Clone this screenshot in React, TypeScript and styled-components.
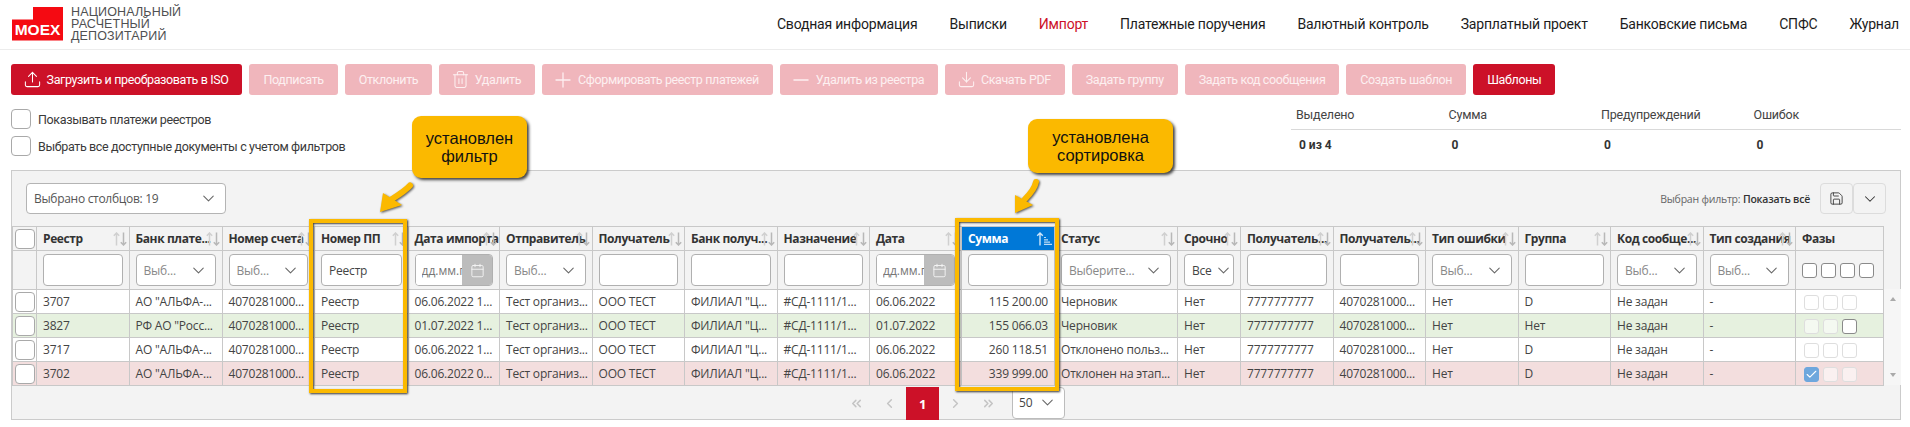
import React from "react";
import styled, { createGlobalStyle } from "styled-components";
import { Upload, Trash2, Plus, Minus, Download, Calendar, Save, ChevronDown, ChevronLeft, ChevronRight, ChevronsLeft, ChevronsRight, Check } from "lucide-react";

const Global = createGlobalStyle`
  html, body { margin: 0; padding: 0; background: #fff; }
  body { font-family: "Roboto", "Liberation Sans", sans-serif; color: #333; }
  * { box-sizing: border-box; }
`;

const Page = styled.div`
  position: relative;
  width: 1910px;
  height: 427px;
  overflow: hidden;
`;

const Header = styled.header`
  display: flex;
  align-items: center;
  justify-content: space-between;
  height: 50px;
  padding: 0 11px 2px 12px;
  border-bottom: 1px solid #ececec;
`;

const Logo = styled.div`
  display: flex;
  align-items: flex-end;
  gap: 8px;
  height: 34px;
`;

const LogoMark = styled.div`
  width: 51px;
  height: 34px;
  background: #f50a12;
  clip-path: polygon(21px 0, 100% 0, 100% 100%, 0 100%, 0 13px, 21px 13px);
  color: #fff;
  font: bold 15.5px/1 "Liberation Sans", sans-serif;
  display: flex;
  align-items: flex-end;
  justify-content: center;
  padding-bottom: 3px;
`;

const LogoText = styled.div`
  font: 12.5px/12px "Liberation Sans", sans-serif;
  color: #4f5052;
  letter-spacing: 0.15px;
  margin-bottom: -1px;
`;

const Nav = styled.nav`
  display: flex;
  gap: 32px;
`;

const NavItem = styled.span<{ $active?: boolean }>`
  font-size: 14px;
  letter-spacing: -0.2px;
  color: ${(p) => (p.$active ? "#cc1128" : "#1c1c1c")};
`;

const Toolbar = styled.div`
  display: flex;
  gap: 7px;
  margin-top: 14px;
  padding-left: 11px;
`;

const Btn = styled.div<{ $on?: boolean }>`
  display: flex;
  align-items: center;
  gap: 6px;
  height: 31px;
  padding: 0 14px;
  border-radius: 3px;
  font-size: 12.5px;
  letter-spacing: -0.38px;
  white-space: nowrap;
  background: ${(p) => (p.$on ? "#cc1128" : "#f0b6bc")};
  color: ${(p) => (p.$on ? "#fff" : "#fdf0f1")};
`;

const BtnIcon = styled.span<{ $wide?: boolean }>`
  display: flex;
  flex: none;
  margin: ${(p) => (p.$wide ? "0 -3px 0 -5px" : "0 -1px 0 -2.4px")};
`;

const Options = styled.div`
  display: flex;
  justify-content: space-between;
  height: 75px;
  padding: 5px 9px 0 11px;
`;

const Checks = styled.div`
  display: flex;
  flex-direction: column;
  gap: 7px;
  padding-top: 9px;
`;

const CheckRow = styled.label`
  display: flex;
  align-items: center;
  gap: 7px;
  font-size: 12.5px;
  letter-spacing: -0.36px;
  color: #3a3a3a;
`;

const Box = styled.span`
  display: block;
  flex: none;
  width: 20px;
  height: 20px;
  background: #fff;
  border: 1px solid #a9a9a9;
  border-radius: 4px;
`;

const Stats = styled.div`
  display: grid;
  grid-template-columns: repeat(4, 152.5px);
  width: 610px;
  grid-template-rows: 30px 30px;
`;

const StatLabel = styled.div`
  display: flex;
  align-items: center;
  padding-left: 5px;
  font-size: 12.5px;
  letter-spacing: -0.2px;
  color: #444;
  border-bottom: 1px solid #d9d9d9;
`;

const StatValue = styled.div`
  display: flex;
  align-items: center;
  padding-left: 8px;
  font-size: 12px;
  font-weight: 700;
  color: #333;
`;

const Panel = styled.section`
  width: 1890px;
  height: 250px;
  margin-left: 11px;
  background: #f3f3f3;
  border: 1px solid #cbcbcb;
  font-family: "Open Sans", "Noto Sans", sans-serif;
  font-size: 12px;
  letter-spacing: -0.2px;
`;

const PanelBar = styled.div`
  display: flex;
  align-items: flex-start;
  justify-content: space-between;
  height: 55px;
  padding: 12px 14px 0;
`;

const ColumnSelect = styled.div`
  display: flex;
  align-items: center;
  justify-content: space-between;
  width: 200px;
  height: 31px;
  padding: 0 10px 0 7px;
  background: #fff;
  border: 1px solid #b4b4b4;
  border-radius: 4px;
  letter-spacing: -0.3px;
  color: #555;
`;

const FilterInfo = styled.div`
  display: flex;
  align-items: center;
  height: 31px;
`;

const FilterLabel = styled.span`
  font-size: 10.5px;
  letter-spacing: -0.22px;
  color: #666;
  margin-right: 10px;
  b { color: #333; font-weight: 600; }
`;

const IconBtn = styled.div`
  display: flex;
  align-items: center;
  justify-content: center;
  width: 33px;
  height: 31px;
  border: 1px solid #dcdcdc;
  border-radius: 4px;
  color: #333;
`;

const TableWrap = styled.div`
  display: flex;
  align-items: flex-start;
`;

const Table = styled.table`
  width: 1871px;
  border-collapse: collapse;
  table-layout: fixed;
  td, th { border: 1px solid #c8c8c8; }
`;

const HeadCell = styled.th<{ $sorted?: boolean }>`
  position: relative;
  height: 24px;
  padding: 0 0 0 6px;
  text-align: left;
  font-size: 12px;
  font-weight: 700;
  letter-spacing: -0.4px;
  white-space: nowrap;
  overflow: hidden;
  color: ${(p) => (p.$sorted ? "#fff" : "#333")};
  background: ${(p) => (p.$sorted ? "#0078d7" : "#f3f3f3")};
`;

const SortMark = styled.svg`
  position: absolute;
  right: 2px;
  top: 5px;
`;

const FilterCell = styled.td`
  height: 39px;
  padding: 0 6px;
  background: #f3f3f3;
`;

const FilterBox = styled.input`
  display: block;
  width: 100%;
  height: 32px;
  padding: 0 7px;
  background: #fff;
  border: 1px solid #b0b0b0;
  border-radius: 4px;
  outline: none;
  font: 12px "Open Sans", "Noto Sans", sans-serif;
  letter-spacing: -0.2px;
  color: #444;
`;

const FilterSelect = styled.div<{ $dark?: boolean; $tight?: boolean }>`
  display: flex;
  align-items: center;
  justify-content: space-between;
  height: 32px;
  padding: 0 ${(p) => (p.$tight ? "3px" : "10px")} 0 7px;
  background: #fff;
  border: 1px solid #b0b0b0;
  border-radius: 4px;
  font-weight: 400;
  color: ${(p) => (p.$dark ? "#444" : "#888")};
`;

const DateField = styled.div`
  display: flex;
  height: 32px;
  border: 1px solid #b0b0b0;
  border-radius: 4px;
  overflow: hidden;
  background: #fff;
`;

const DateInput = styled.input`
  flex: 1;
  min-width: 0;
  padding: 0 0 0 6px;
  border: 0;
  outline: none;
  font: 12px "Open Sans", "Noto Sans", sans-serif;
  &::placeholder { color: #777; opacity: 1; }
`;

const DateBtn = styled.div`
  display: flex;
  align-items: center;
  justify-content: center;
  flex: none;
  width: 30px;
  background: #bcbcbc;
  color: #f4f4f4;
`;

const PhaseGroup = styled.div`
  display: flex;
  gap: 4px;
`;

const PhaseBox = styled.span<{ $mode?: "on" | "off" | "checked" }>`
  display: flex;
  align-items: center;
  justify-content: center;
  flex: none;
  width: 15px;
  height: 15px;
  border-radius: 3px;
  color: #fff;
  background: ${(p) => (p.$mode === "checked" ? "#6ea7dd" : p.$mode === "off" ? "rgba(255,255,255,.55)" : "#fff")};
  border: 1px solid ${(p) => (p.$mode === "checked" ? "#6ea7dd" : p.$mode === "off" ? "#dedede" : "#8a8a8a")};
`;

const Row = styled.tr<{ $tone?: "green" | "red" }>`
  background: ${(p) => (p.$tone === "green" ? "#e6f1df" : p.$tone === "red" ? "#f3dede" : "#fff")};
`;

const Cell = styled.td<{ $right?: boolean }>`
  height: 24px;
  padding: 0 ${(p) => (p.$right ? "6px" : "0")} 0 ${(p) => (p.$right ? "0" : "6px")};
  font-size: 12px;
  white-space: nowrap;
  overflow: hidden;
  color: #444;
  text-align: ${(p) => (p.$right ? "right" : "left")};
`;

const BoxCell = styled.td`
  padding: 0 0 0 2px;
`;

const PhaseCell = styled.td`
  padding: 2px 0 0 8px;
`;

const ScrollTrack = styled.div`
  display: flex;
  flex-direction: column;
  justify-content: space-between;
  align-items: center;
  flex: none;
  width: 17px;
  height: 96px;
  margin-top: 63px;
  padding: 8px 0;
  background: #f6f6f6;
`;

const ScrollArrow = styled.span<{ $down?: boolean }>`
  width: 0;
  height: 0;
  border-left: 3.5px solid transparent;
  border-right: 3.5px solid transparent;
  ${(p) => (p.$down ? "border-top: 4px solid #aaa;" : "border-bottom: 4px solid #aaa;")}
`;

const Pager = styled.div`
  display: flex;
  align-items: flex-start;
  height: 33px;
  margin-top: 1px;
  padding-left: 828px;
`;

const PageItem = styled.div<{ $active?: boolean }>`
  display: flex;
  align-items: center;
  justify-content: center;
  width: 33px;
  height: 33px;
  font-size: 13px;
  font-weight: 700;
  background: ${(p) => (p.$active ? "#cc1128" : "transparent")};
  color: ${(p) => (p.$active ? "#fff" : "#c4c4c4")};
`;

const PageSize = styled.div`
  display: flex;
  align-items: center;
  justify-content: space-between;
  width: 53px;
  height: 32px;
  margin-left: 7px;
  padding: 0 10px 2px 6px;
  background: #fff;
  border: 1px solid #bcbcbc;
  border-radius: 4px;
  color: #444;
`;

const Callout = styled.div<{ $x: number; $y: number; $w: number; $h: number }>`
  position: absolute;
  left: ${(p) => p.$x}px;
  top: ${(p) => p.$y}px;
  width: ${(p) => p.$w}px;
  height: ${(p) => p.$h}px;
  display: flex;
  align-items: center;
  justify-content: center;
  text-align: center;
  background: #fbb900;
  border-radius: 9px;
  box-shadow: 2px 2px 3px #444;
  font: 16.5px/18px "Liberation Sans", sans-serif;
  color: #111;
`;

const Frame = styled.div<{ $x: number; $y: number; $w: number; $h: number }>`
  position: absolute;
  left: ${(p) => p.$x}px;
  top: ${(p) => p.$y}px;
  width: ${(p) => p.$w}px;
  height: ${(p) => p.$h}px;
  border: 4px solid #fbb900;
  box-shadow: 1px 1px 2px #333, inset 1px 1px 2px #444;
  pointer-events: none;
`;

const ArrowMark = styled.svg<{ $x: number; $y: number }>`
  position: absolute;
  left: ${(p) => p.$x}px;
  top: ${(p) => p.$y}px;
  filter: drop-shadow(1.5px 1.5px 1px #555);
  overflow: visible;
`;

const edges = [12, 36, 128.5, 221.5, 314, 407.5, 499, 591.5, 684, 776.5, 869, 961, 1054, 1177, 1240, 1332.5, 1425, 1517.5, 1610, 1702.5, 1795, 1883];

const Col = styled.col<{ $w: number }>`
  width: ${(p) => p.$w}px;
`;

const heads = ["Реестр", "Банк плате...", "Номер счета", "Номер ПП", "Дата импорта", "Отправитель", "Получатель", "Банк получ...", "Назначение", "Дата", "Сумма", "Статус", "Срочно", "Получатель...", "Получатель...", "Тип ошибки", "Группа", "Код сообще...", "Тип создания", "Фазы"];

const filters: Array<{ kind: "input" | "select" | "date" | "phases"; text?: string; dark?: boolean; tight?: boolean }> = [
  { kind: "input" },
  { kind: "select", text: "Выб..." },
  { kind: "select", text: "Выб..." },
  { kind: "input", text: "Реестр" },
  { kind: "date" },
  { kind: "select", text: "Выб..." },
  { kind: "input" },
  { kind: "input" },
  { kind: "input" },
  { kind: "date" },
  { kind: "input" },
  { kind: "select", text: "Выберите..." },
  { kind: "select", text: "Все", dark: true, tight: true },
  { kind: "input" },
  { kind: "input" },
  { kind: "select", text: "Выб..." },
  { kind: "input" },
  { kind: "select", text: "Выб..." },
  { kind: "select", text: "Выб..." },
  { kind: "phases" },
];

const rows: Array<{ tone?: "green" | "red"; cells: string[]; phases: Array<"on" | "off" | "checked"> }> = [
  {
    cells: ["3707", 'АО "АЛЬФА-...', "4070281000...", "Реестр", "06.06.2022 1...", "Тест организ...", "ООО ТЕСТ", 'ФИЛИАЛ "Ц...', "#СД-1111/1...", "06.06.2022", "115 200.00", "Черновик", "Нет", "7777777777", "4070281000...", "Нет", "D", "Не задан", "-"],
    phases: ["off", "off", "off"],
  },
  {
    tone: "green",
    cells: ["3827", 'РФ АО "Росс...', "4070281000...", "Реестр", "01.07.2022 1...", "Тест организ...", "ООО ТЕСТ", 'ФИЛИАЛ "Ц...', "#СД-1111/1...", "01.07.2022", "155 066.03", "Черновик", "Нет", "7777777777", "4070281000...", "Нет", "Нет", "Не задан", "-"],
    phases: ["off", "off", "on"],
  },
  {
    cells: ["3717", 'АО "АЛЬФА-...', "4070281000...", "Реестр", "06.06.2022 1...", "Тест организ...", "ООО ТЕСТ", 'ФИЛИАЛ "Ц...', "#СД-1111/1...", "06.06.2022", "260 118.51", "Отклонено польз...", "Нет", "7777777777", "4070281000...", "Нет", "D", "Не задан", "-"],
    phases: ["off", "off", "off"],
  },
  {
    tone: "red",
    cells: ["3702", 'АО "АЛЬФА-...', "4070281000...", "Реестр", "06.06.2022 0...", "Тест организ...", "ООО ТЕСТ", 'ФИЛИАЛ "Ц...', "#СД-1111/1...", "06.06.2022", "339 999.00", "Отклонен на этап...", "Нет", "7777777777", "4070281000...", "Нет", "D", "Не задан", "-"],
    phases: ["checked", "off", "off"],
  },
];

const Chevron = () => <ChevronDown size={19} strokeWidth={1.3} color="#666" style={{ flex: "none", margin: "0 -3px" }} />;

const SortIcon = () => (
  <SortMark width="14" height="14" viewBox="0 0 14 14" fill="none" strokeWidth="1.5">
    <path d="M3.5 13.5V1M.8 3.8 3.5 1 6.2 3.8" stroke="#d0d0d0" />
    <path d="M10.5 .5V13M7.8 10.2 10.5 13 13.2 10.2" stroke="#b8b8b8" />
  </SortMark>
);

const SortedIcon = () => (
  <SortMark width="16" height="14" viewBox="0 0 16 14" fill="none">
    <path d="M4 13.5V1M1.2 3.8 4 1 6.8 3.8" stroke="#cfe6fa" strokeWidth="1.4" />
    <path d="M8 5.5h2M8 7.8h4M8 10.1h6M8 12.4h8" stroke="#bcdcf6" strokeWidth="1.2" />
  </SortMark>
);

const buttons: Array<{ label: string; on?: boolean; icon?: React.ReactNode; wide?: boolean }> = [
  { label: "Загрузить и преобразовать в ISO", on: true, icon: <Upload size={19} strokeWidth={1.3} /> },
  { label: "Подписать" },
  { label: "Отклонить" },
  { label: "Удалить", icon: <Trash2 size={19} strokeWidth={1.3} /> },
  { label: "Сформировать реестр платежей", wide: true, icon: <Plus size={24} strokeWidth={1.3} /> },
  { label: "Удалить из реестра", wide: true, icon: <Minus size={24} strokeWidth={1.5} /> },
  { label: "Скачать PDF", icon: <Download size={19} strokeWidth={1.3} /> },
  { label: "Задать группу" },
  { label: "Задать код сообщения" },
  { label: "Создать шаблон" },
  { label: "Шаблоны", on: true },
];

const navItems = ["Сводная информация", "Выписки", "Импорт", "Платежные поручения", "Валютный контроль", "Зарплатный проект", "Банковские письма", "СПФС", "Журнал"];

const stats = [
  ["Выделено", "0 из 4"],
  ["Сумма", "0"],
  ["Предупреждений", "0"],
  ["Ошибок", "0"],
];

export default function App() {
  return (
    <Page>
      <Global />
      <Header>
        <Logo>
          <LogoMark>MOEX</LogoMark>
          <LogoText>
            НАЦИОНАЛЬНЫЙ
            <br />
            РАСЧЕТНЫЙ
            <br />
            ДЕПОЗИТАРИЙ
          </LogoText>
        </Logo>
        <Nav>
          {navItems.map((n) => (
            <NavItem key={n} $active={n === "Импорт"}>
              {n}
            </NavItem>
          ))}
        </Nav>
      </Header>

      <Toolbar>
        {buttons.map((b) => (
          <Btn key={b.label} $on={b.on}>
            {b.icon && <BtnIcon $wide={b.wide}>{b.icon}</BtnIcon>}
            {b.label}
          </Btn>
        ))}
      </Toolbar>

      <Options>
        <Checks>
          <CheckRow>
            <Box />
            Показывать платежи реестров
          </CheckRow>
          <CheckRow>
            <Box />
            Выбрать все доступные документы с учетом фильтров
          </CheckRow>
        </Checks>
        <Stats>
          {stats.map(([l]) => (
            <StatLabel key={l}>{l}</StatLabel>
          ))}
          {stats.map(([l, v]) => (
            <StatValue key={l}>{v}</StatValue>
          ))}
        </Stats>
      </Options>

      <Panel>
        <PanelBar>
          <ColumnSelect>
            Выбрано столбцов: 19
            <Chevron />
          </ColumnSelect>
          <FilterInfo>
            <FilterLabel>
              Выбран фильтр: <b>Показать всё</b>
            </FilterLabel>
            <IconBtn>
              <Save size={15} strokeWidth={1.4} />
            </IconBtn>
            <IconBtn>
              <ChevronDown size={18} strokeWidth={1.4} />
            </IconBtn>
          </FilterInfo>
        </PanelBar>

        <TableWrap>
          <Table>
            <colgroup>
              {edges.slice(1).map((e, i) => (
                <Col key={e} $w={e - edges[i]} />
              ))}
            </colgroup>
            <thead>
              <tr>
                <BoxCell as="th">
                  <Box />
                </BoxCell>
                {heads.map((h, i) => (
                  <HeadCell key={i} $sorted={h === "Сумма"}>
                    {h}
                    {h === "Сумма" ? <SortedIcon /> : h === "Фазы" ? null : <SortIcon />}
                  </HeadCell>
                ))}
              </tr>
              <tr>
                <FilterCell />
                {filters.map((f, i) => (
                  <FilterCell key={i}>
                    {f.kind === "input" && <FilterBox readOnly value={f.text ?? ""} />}
                    {f.kind === "select" && (
                      <FilterSelect $dark={f.dark} $tight={f.tight}>
                        {f.text}
                        <Chevron />
                      </FilterSelect>
                    )}
                    {f.kind === "date" && (
                      <DateField>
                        <DateInput readOnly placeholder="дд.мм.гггг" />
                        <DateBtn>
                          <Calendar size={15} strokeWidth={1.5} />
                        </DateBtn>
                      </DateField>
                    )}
                    {f.kind === "phases" && (
                      <PhaseGroup>
                        <PhaseBox />
                        <PhaseBox />
                        <PhaseBox />
                        <PhaseBox />
                      </PhaseGroup>
                    )}
                  </FilterCell>
                ))}
              </tr>
            </thead>
            <tbody>
              {rows.map((r) => (
                <Row key={r.cells[0]} $tone={r.tone}>
                  <BoxCell>
                    <Box />
                  </BoxCell>
                  {r.cells.map((c, i) => (
                    <Cell key={i} $right={i === 10}>
                      {c}
                    </Cell>
                  ))}
                  <PhaseCell>
                    <PhaseGroup>
                      {r.phases.map((m, i) => (
                        <PhaseBox key={i} $mode={m}>
                          {m === "checked" && <Check size={13} strokeWidth={2} />}
                        </PhaseBox>
                      ))}
                    </PhaseGroup>
                  </PhaseCell>
                </Row>
              ))}
            </tbody>
          </Table>
          <ScrollTrack>
            <ScrollArrow />
            <ScrollArrow $down />
          </ScrollTrack>
        </TableWrap>

        <Pager>
          <PageItem><ChevronsLeft size={15} strokeWidth={2.4} /></PageItem>
          <PageItem><ChevronLeft size={15} strokeWidth={2.4} /></PageItem>
          <PageItem $active>1</PageItem>
          <PageItem><ChevronRight size={15} strokeWidth={2.4} /></PageItem>
          <PageItem><ChevronsRight size={15} strokeWidth={2.4} /></PageItem>
          <PageSize>
            50
            <Chevron />
          </PageSize>
        </Pager>
      </Panel>

      <Frame $x={309} $y={219} $w={98} $h={174} />
      <Frame $x={955} $y={218} $w={104} $h={173} />
      <Callout $x={412} $y={116} $w={115} $h={62}>
        установлен
        <br />
        фильтр
      </Callout>
      <Callout $x={1028} $y={119} $w={145} $h={54}>
        установлена
        <br />
        сортировка
      </Callout>
      <ArrowMark $x={378} $y={180} width="38" height="34" viewBox="0 0 38 34">
        <path d="M32 5.5C28 10 22 14 14 19" stroke="#fbb900" strokeWidth="6" strokeLinecap="round" fill="none" />
        <path d="M2 32 5 13 24 25Z" fill="#fbb900" />
      </ArrowMark>
      <ArrowMark $x={1012} $y={176} width="30" height="38" viewBox="0 0 30 38">
        <path d="M24 6C23 11 19 17 13 23" stroke="#fbb900" strokeWidth="6" strokeLinecap="round" fill="none" />
        <path d="M3 37 3 19 21 29Z" fill="#fbb900" />
      </ArrowMark>
    </Page>
  );
}
